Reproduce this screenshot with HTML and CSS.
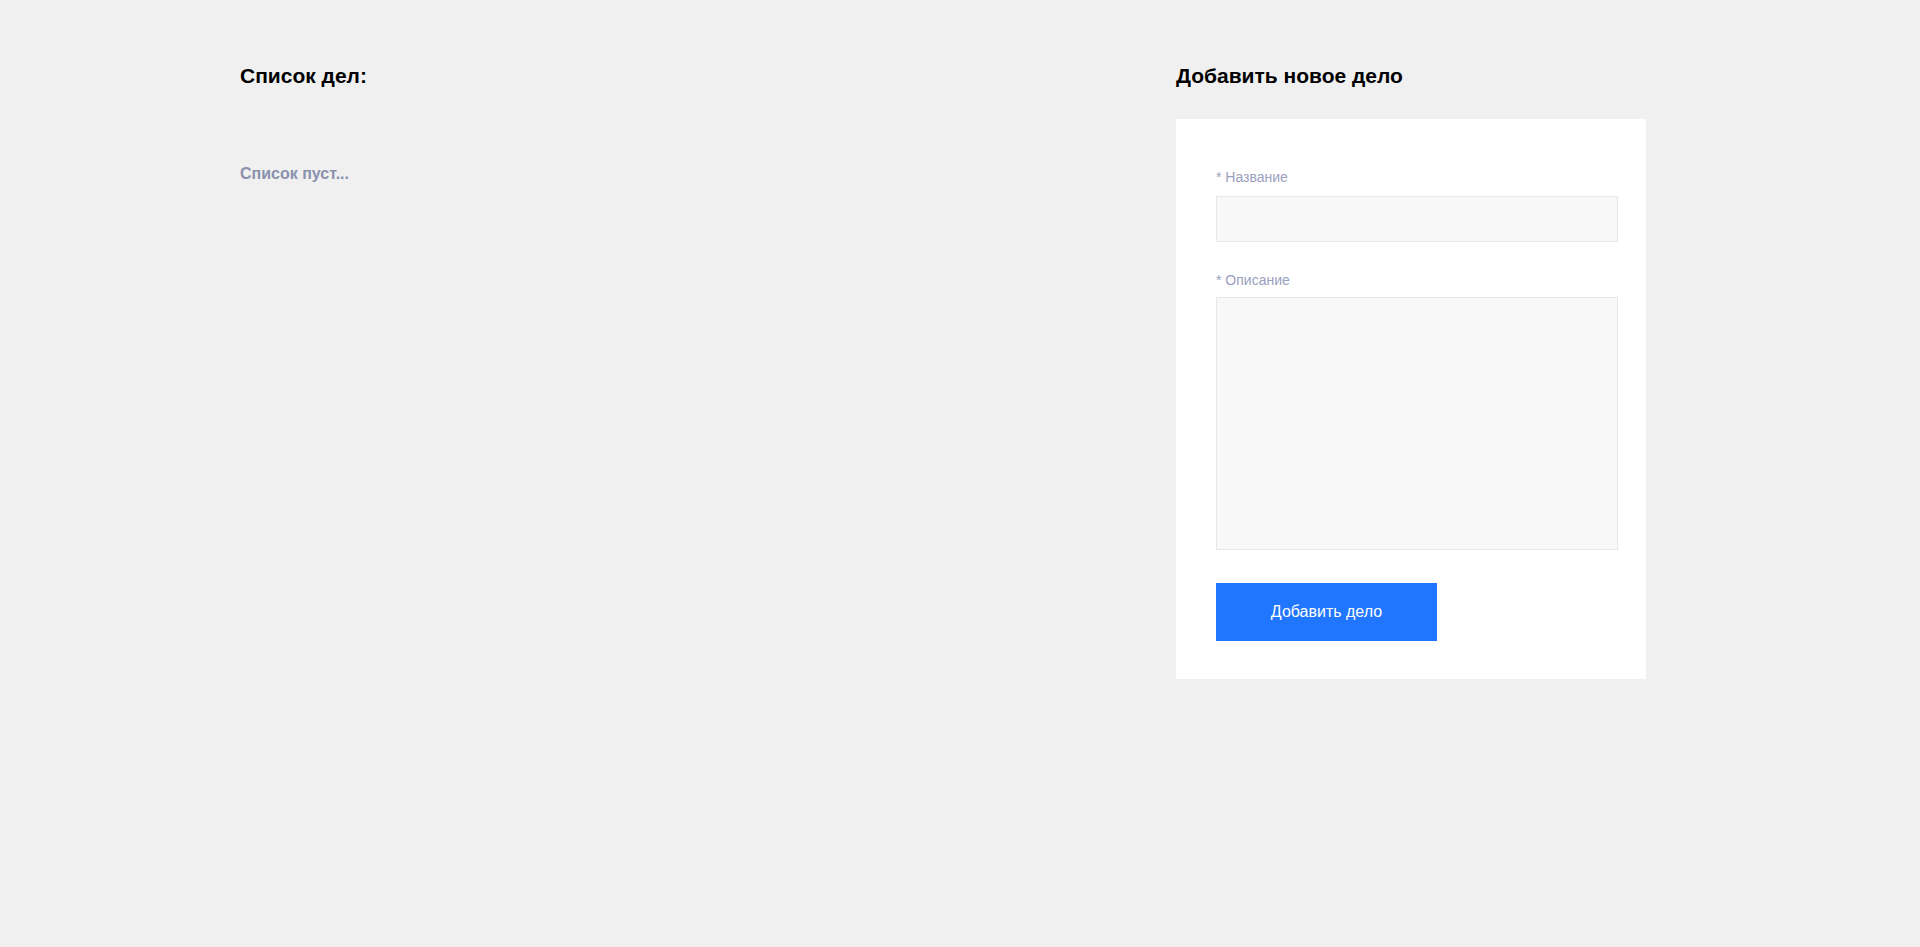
FILE: index.html
```html
<!DOCTYPE html>
<html lang="ru">
<head>
<meta charset="utf-8">
<title>Список дел</title>
<link rel="stylesheet" href="styles.css">
</head>
<body>
<div class="page">
  <div class="container">
    <section class="list-col">
      <h2 class="title">Список дел:</h2>
      <p class="empty">Список пуст...</p>
    </section>
    <section class="form-col">
      <h2 class="title">Добавить новое дело</h2>
      <form class="card">
        <label class="label">* Название</label>
        <input class="field" type="text">
        <label class="label label-gap">* Описание</label>
        <textarea class="field area"></textarea>
        <button class="btn" type="button">Добавить дело</button>
      </form>
    </section>
  </div>
</div>
</body>
</html>
```
FILE: styles.css
```css
html, body {
  margin: 0;
  padding: 0;
  background: #f0f0f0;
  font-family: "Liberation Sans", Arial, sans-serif;
}
.page {
  min-height: 1012px;
  box-sizing: border-box;
  padding-top: 64px;
}
.container {
  display: flex;
  margin-left: 240px;
  width: 1406px;
}
.list-col {
  flex: 1;
}
.form-col {
  width: 470px;
}
.title {
  margin: 0;
  font-size: 21px;
  line-height: 24px;
  font-weight: bold;
  color: #000;
}
.empty {
  margin: 76px 0 0;
  font-size: 16px;
  line-height: 20px;
  font-weight: bold;
  color: #8a91ad;
}
.card {
  display: flex;
  flex-direction: column;
  align-items: flex-start;
  margin-top: 31px;
  background: #fff;
  padding: 50px 40px 38px;
}
.label {
  font-size: 14px;
  line-height: 16px;
  color: #9aa0c0;
  margin-bottom: 11px;
}
.label-gap {
  margin-top: 30px;
  margin-bottom: 9px;
}
.field {
  width: 100%;
  height: 34px;
  padding: 5px;
  border: 1px solid #e8e8e8;
  background: #f8f8f8;
  font-family: inherit;
  font-size: 14px;
  outline: none;
  margin: 0;
}
.area {
  height: 241px;
  resize: none;
  display: block;
}
.btn {
  margin-top: 33px;
  width: 221px;
  height: 58px;
  border: none;
  background: #2176ff;
  color: #fff;
  font-family: inherit;
  font-size: 16px;
  cursor: pointer;
}
```
